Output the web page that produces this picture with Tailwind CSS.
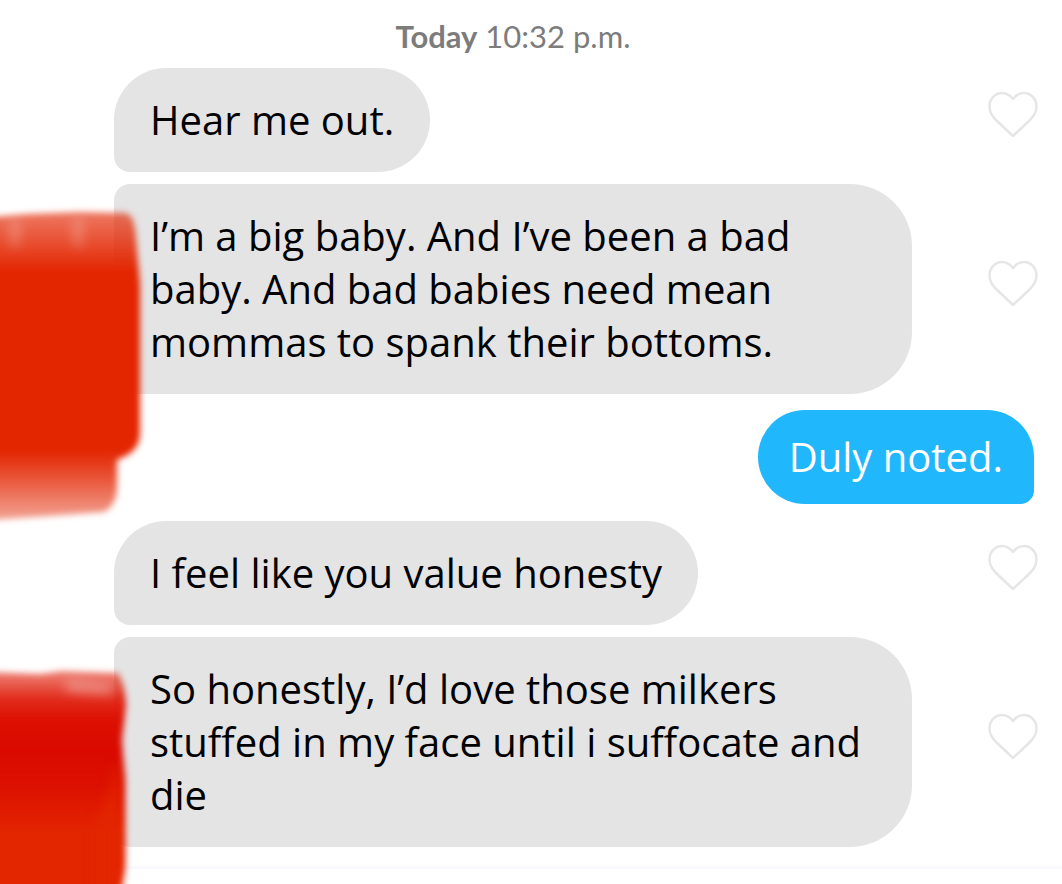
<!DOCTYPE html>
<html lang="en">
<head>
    <meta charset="UTF-8">
    <meta name="viewport" content="width=device-width, initial-scale=1.0">
    <title>Messages</title>
    <script src="https://cdn.jsdelivr.net/npm/@tailwindcss/browser@4"></script>
</head>
<body class="bg-white">
    <main class="relative min-h-screen overflow-hidden font-['Open_Sans',sans-serif] text-[40px] leading-[53px] text-black">
        <!-- Timestamp -->
        <p class="h-[68px] pt-[19px] pr-9 text-center font-['Lato',sans-serif] text-[31px] leading-[34px] text-[#7c7c7c]"><span class="font-bold">Today</span> 10:32 p.m.</p>

        <!-- Conversation -->
        <div class="flex flex-col pr-6 pl-[114px]">
            <div class="flex items-center justify-between">
                <p class="max-w-[798px] rounded-[52px] rounded-bl-[16px] bg-[#e4e4e4] px-9 pt-[25px] pb-[26px]">Hear me out.</p>
                <button type="button" aria-label="Like" class="mb-3 shrink-0">
                    <svg class="h-[46px] w-[50px]" viewBox="0 0 50 46" fill="none" stroke="#e6e6e6" stroke-width="2.5" stroke-linejoin="round"><path d="M25 8C22 4 18 2 14 2C7 2 1.5 8 1.5 15.5C1.5 21 4 25 8 29L25 45L42 29C46 25 48.5 21 48.5 15.5C48.5 8 43 2 36 2C32 2 28 4 25 8Z"/></svg>
                </button>
            </div>

            <div class="mt-3 flex items-center justify-between">
                <p class="max-w-[798px] rounded-[62px] rounded-l-[16px] bg-[#e4e4e4] px-9 pt-[25px] pb-[26px]">I’m a big baby. And I’ve been a bad baby. And bad babies need mean mommas to spank their bottoms.</p>
                <button type="button" aria-label="Like" class="mb-3 shrink-0">
                    <svg class="h-[46px] w-[50px]" viewBox="0 0 50 46" fill="none" stroke="#e6e6e6" stroke-width="2.5" stroke-linejoin="round"><path d="M25 8C22 4 18 2 14 2C7 2 1.5 8 1.5 15.5C1.5 21 4 25 8 29L25 45L42 29C46 25 48.5 21 48.5 15.5C48.5 8 43 2 36 2C32 2 28 4 25 8Z"/></svg>
                </button>
            </div>

            <div class="mt-4 mb-[17px] flex justify-end pr-1">
                <p class="rounded-[48px] rounded-br-[14px] bg-[#21b7fc] px-[31px] pt-5 pb-[21px] text-white">Duly noted.</p>
            </div>

            <div class="flex items-center justify-between">
                <p class="max-w-[798px] rounded-[52px] rounded-bl-[16px] bg-[#e4e4e4] px-9 pt-[25px] pb-[26px]">I feel like you value honesty</p>
                <button type="button" aria-label="Like" class="mb-3 shrink-0">
                    <svg class="h-[46px] w-[50px]" viewBox="0 0 50 46" fill="none" stroke="#e6e6e6" stroke-width="2.5" stroke-linejoin="round"><path d="M25 8C22 4 18 2 14 2C7 2 1.5 8 1.5 15.5C1.5 21 4 25 8 29L25 45L42 29C46 25 48.5 21 48.5 15.5C48.5 8 43 2 36 2C32 2 28 4 25 8Z"/></svg>
                </button>
            </div>

            <div class="mt-3 flex items-center justify-between">
                <p class="max-w-[798px] rounded-[62px] rounded-l-[16px] bg-[#e4e4e4] px-9 pt-[25px] pb-[26px]">So honestly, I’d love those milkers stuffed in my face until i suffocate and die</p>
                <button type="button" aria-label="Like" class="mb-3 shrink-0">
                    <svg class="h-[46px] w-[50px]" viewBox="0 0 50 46" fill="none" stroke="#e6e6e6" stroke-width="2.5" stroke-linejoin="round"><path d="M25 8C22 4 18 2 14 2C7 2 1.5 8 1.5 15.5C1.5 21 4 25 8 29L25 45L42 29C46 25 48.5 21 48.5 15.5C48.5 8 43 2 36 2C32 2 28 4 25 8Z"/></svg>
                </button>
            </div>
        </div>

        <div class="mt-4 h-[6px] bg-gradient-to-b from-white to-[#f8f8fd]"></div>

        <!-- Marker strokes over the avatars -->
        <svg class="pointer-events-none absolute top-0 left-0 h-[884px] w-[160px]" viewBox="0 0 160 884" aria-hidden="true">
            <defs>
                <filter id="soft" x="-20%" y="-20%" width="140%" height="140%" color-interpolation-filters="sRGB"><feGaussianBlur stdDeviation="3"/></filter>
                <filter id="streak" filterUnits="userSpaceOnUse" x="-40" y="150" width="220" height="780" color-interpolation-filters="sRGB"><feGaussianBlur stdDeviation="6"/></filter>
                <linearGradient id="upper" gradientUnits="userSpaceOnUse" x1="0" y1="210" x2="0" y2="522">
                    <stop offset="0" stop-color="#e32500" stop-opacity=".6"/>
                    <stop offset=".1" stop-color="#e32500" stop-opacity=".8"/>
                    <stop offset=".2" stop-color="#e32500"/>
                    <stop offset=".77" stop-color="#e32500"/>
                    <stop offset=".86" stop-color="#e32500" stop-opacity=".78"/>
                    <stop offset="1" stop-color="#e32500" stop-opacity=".4"/>
                </linearGradient>
                <linearGradient id="lower" gradientUnits="userSpaceOnUse" x1="0" y1="668" x2="0" y2="884">
                    <stop offset="0" stop-color="#e02008" stop-opacity=".5"/>
                    <stop offset=".14" stop-color="#df1604" stop-opacity=".9"/>
                    <stop offset=".24" stop-color="#dc1002"/>
                    <stop offset=".38" stop-color="#da0a00"/>
                    <stop offset=".54" stop-color="#dc1000"/>
                    <stop offset=".76" stop-color="#e32500"/>
                </linearGradient>
            </defs>
            <path d="M-10 217L28 214L80 212L125 213C132 214 135 222 136 238L140 285V434C139 448 132 454 117 460V485C117 500 112 508 104 512L50 516L-10 520Z" fill="url(#upper)" filter="url(#soft)"/>
            <path d="M15 220V246M78 218V246" stroke="#ffffff" stroke-opacity=".25" stroke-width="9" filter="url(#streak)"/>
            <path d="M-10 672L40 674L62 671L118 673C123 680 126 695 126 705L122 740L125 780V860C125 874 122 880 118 900H-10Z" fill="url(#lower)" filter="url(#soft)"/>
            <path d="M115 765C112 790 105 808 96 822V900H118V770Z" fill="#e32500" filter="url(#streak)"/>
            <path d="M66 686L112 690" stroke="#ffffff" stroke-opacity=".4" stroke-width="9" filter="url(#streak)"/>
        </svg>
    </main>
</body>
</html>
